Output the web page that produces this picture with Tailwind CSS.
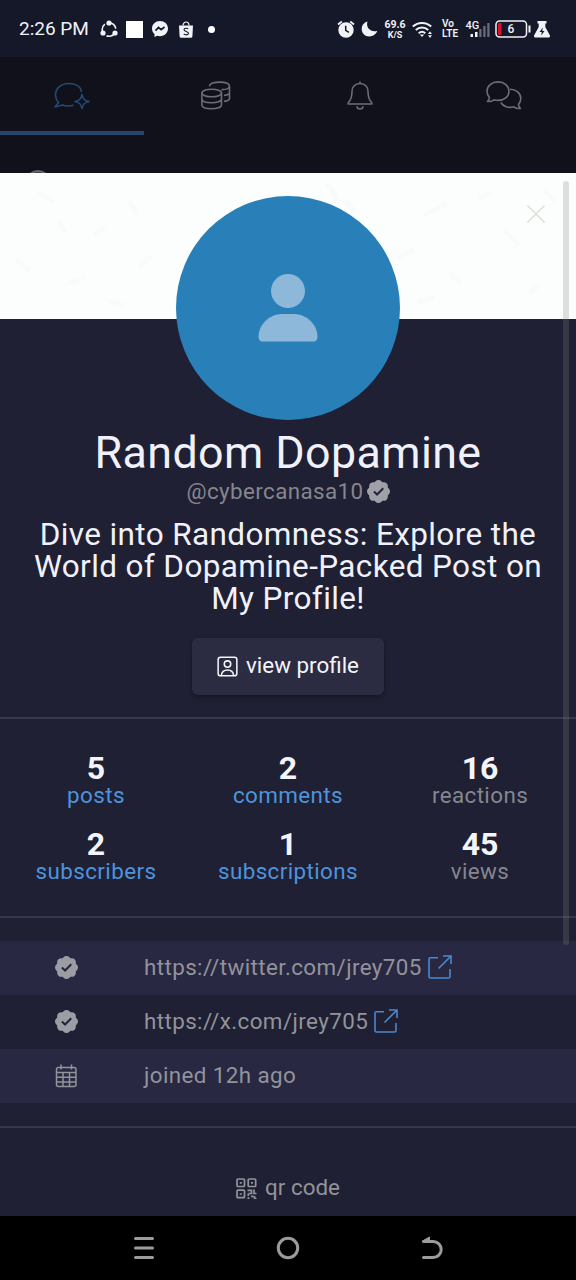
<!DOCTYPE html>
<html lang="en">
<head>
<meta charset="utf-8">
<title>Random Dopamine</title>
<script src="https://cdn.jsdelivr.net/npm/@tailwindcss/browser@4"></script>
</head>
<body class="bg-black">
<svg class="hidden">
  <symbol id="seal" viewBox="0 0 16 16"><path d="M10.067.87a2.89 2.89 0 0 0-4.134 0l-.622.638-.89-.011a2.89 2.89 0 0 0-2.924 2.924l.01.89-.636.622a2.89 2.89 0 0 0 0 4.134l.637.622-.011.89a2.89 2.89 0 0 0 2.924 2.924l.89-.01.622.636a2.89 2.89 0 0 0 4.134 0l.622-.637.89.011a2.89 2.89 0 0 0 2.924-2.924l-.01-.89.636-.622a2.89 2.89 0 0 0 0-4.134l-.637-.622.011-.89a2.89 2.89 0 0 0-2.924-2.924l-.89.01z"/><path d="M4.800 8 7 10.100l4.300-4.400" fill="none" stroke="#24253a" stroke-width="1.400"/></symbol>
  <symbol id="ext" viewBox="0 0 24 24"><path d="M10 2.800H2.500a1.500 1.500 0 0 0-1.500 1.500v17.200A1.500 1.500 0 0 0 2.500 23h18a1.500 1.500 0 0 0 1.500-1.500V14M15 1h8v8M23 1 10.500 13.500" fill="none" stroke="currentColor" stroke-width="1.600"/></symbol>
</svg>
<div class="w-[576px] h-[1280px] overflow-hidden flex flex-col font-['Roboto',sans-serif] bg-[#1f2033] relative">
  <!-- status bar -->
  <div class="h-[57px] shrink-0 bg-[#151828] text-[#f1f2f8] flex items-center justify-between pl-[19px] pr-[25px] pt-px">
    <div class="flex items-center">
      <span class="text-[19px] w-[81px] whitespace-nowrap">2:26 PM</span>
      <svg class="w-[18px] h-[18px]" viewBox="0 0 18 18" fill="none" stroke="currentColor" stroke-width="1.600"><circle cx="9" cy="9.500" r="6.800" stroke-dasharray="10.200 4" stroke-dashoffset="-3"/><g fill="currentColor" stroke="none"><circle cx="9" cy="3" r="2.600"/><circle cx="3" cy="13" r="2.600"/><circle cx="15" cy="13" r="2.600"/></g></svg>
      <div class="w-[17px] h-[17px] bg-white ml-2"></div>
      <svg class="w-4 h-4 ml-[9px]" viewBox="0 0 16 16"><path fill="currentColor" d="M8 0C3.500 0 0 3.200 0 7.500c0 2.300 1 4.300 2.500 5.600V16l2.600-1.200c.9.200 1.900.4 2.900.4 4.500 0 8-3.300 8-7.700S12.500 0 8 0"/><path d="m3.500 9.600 3-3.200 2.600 2.200 3.400-2.600" fill="none" stroke="#151828" stroke-width="1.700"/></svg>
      <svg class="w-4 h-[17px] ml-[10px]" viewBox="0 0 16 17"><path fill="currentColor" d="M1 4.500h14l-.6 11.100a1.200 1.200 0 0 1-1.200 1.100H2.800a1.200 1.200 0 0 1-1.200-1.100z"/><path d="M5 4.500a3 3.500 0 0 1 6 0" fill="none" stroke="currentColor" stroke-width="1.200"/><path d="M10.200 8C9.500 7 6 6.700 6 8.700c0 2 4.500 1.400 4.500 3.600 0 2-3.500 2-4.800.6" fill="none" stroke="#151828" stroke-width="1.100"/></svg>
      <div class="w-[7px] h-[7px] rounded-full bg-white ml-[14px]"></div>
    </div>
    <div class="flex items-center">
      <svg class="w-[18px] h-[18px]" viewBox="0 0 18 18"><circle cx="9" cy="10" r="7.700" fill="currentColor"/><path d="M1 4.500 4.800 1.500M17 4.500 13.200 1.500" stroke="currentColor" stroke-width="1.800"/><path d="M8.700 5.800v4.600l3.200 1.900" fill="none" stroke="#151828" stroke-width="1.500"/></svg>
      <svg class="w-[17px] h-[16px] ml-[6px]" viewBox="0 0 17 16"><path fill="currentColor" d="M6.500.5C2.800 1.500.7 4.500.7 8c0 4.300 3.300 7.500 7.500 7.500 4 0 7-2.500 8.100-5.700-5.800 2.200-12-3-9.800-9.300"/></svg>
      <div class="w-[22px] ml-[6px] text-center font-bold leading-[11px] whitespace-nowrap flex flex-col items-center"><span class="text-[10.500px]">69.6</span><span class="text-[9px] leading-[10px]">K/S</span></div>
      <svg class="w-[21px] h-[17px] ml-[6px]" viewBox="0 0 21 17" fill="none" stroke="currentColor" stroke-width="2"><path d="M.8 5.500a13.500 13.500 0 0 1 18.400 0M3.800 9a9 9 0 0 1 12.400 0M6.700 12.200a5 5 0 0 1 6.600 0"/><path d="m7.800 13.500 2.200 2.400 2.200-2.400z" fill="currentColor" stroke="none"/><path d="m16 13 2-2.800L20 13zm0 1.300 2 2.700 2-2.700z" fill="currentColor" stroke="none"/></svg>
      <div class="w-[18px] ml-[9px] font-semibold text-[10px] leading-[10px]">Vo<br>LTE</div>
      <svg class="w-[26px] h-[20px] ml-[5px]" viewBox="0 0 26 20"><path fill="#6b6d7a" d="M14.300 10h2.200v8h-2.200zM18.300 7h2.200v11h-2.200zM22.300 4h2.200v14h-2.200z"/><path fill="currentColor" d="M5.500 15h2.500v3H5.500zM10 13h2.500v5H10z"/><text x="0.500" y="9.500" font-size="11" font-weight="500" fill="currentColor">4G</text></svg>
      <svg class="w-[36px] h-[18px] ml-[4px]" viewBox="0 0 36 18"><rect x="1" y="1" width="30.500" height="16" rx="3.500" fill="none" stroke="currentColor" stroke-width="1.500"/><rect x="3" y="3" width="3.500" height="12" rx="1" fill="#d8142c"/><path d="M34.500 5.500v7" stroke="currentColor" stroke-width="2"/><text x="16" y="13.300" text-anchor="middle" font-size="12" font-weight="500" fill="currentColor">6</text></svg>
      <svg class="w-[16px] h-[18px] ml-[3px] mr-px" viewBox="0 0 16 18"><path fill="currentColor" d="M3.500 1h9v2.500h-1.200V7l4.500 8.200c.6 1.100-.1 2.300-1.300 2.300H1.500C.3 17.500-.4 16.300.2 15.200L4.700 7V3.500H3.500z"/><path d="M8.800 7.500 5.500 12h2.300l-.6 3.500L10.500 11H8.200z" fill="#151828"/></svg>
    </div>
  </div>
  <!-- dimmed tab bar -->
  <div class="h-[116px] shrink-0 bg-[#10111b] flex flex-col overflow-hidden">
    <div class="grid grid-cols-4 h-[78px] shrink-0 text-[#6c6d78]">
      <div class="flex justify-center pt-[22px] text-[#264a75] border-b-[4px] border-[#28456b]">
        <svg class="w-[36px] h-[30px]" viewBox="0 0 36 30" fill="none" stroke="currentColor" stroke-width="1.600" stroke-linejoin="round"><path d="M27.500 13.200C27 7.500 21.500 4.500 14.500 4.500 7 4.500 1.500 9.500 1.500 16c0 2.800 1.200 5.500 3 7.500L1 28l7.500-2c3 1.200 7.500 1.200 11 .3"/><path d="M28 15.500c.8 4.500 2.500 6.200 7 7-4.500.8-6.200 2.500-7 7-.8-4.500-2.500-6.200-7-7 4.500-.8 6.200-2.500 7-7z"/></svg>
      </div>
      <div class="flex justify-center pt-6">
        <svg class="w-[30px] h-[29px]" viewBox="0 0 30 29" fill="none" stroke="currentColor" stroke-width="1.600"><ellipse cx="10.700" cy="12" rx="9.800" ry="3.800"/><path d="M.9 12v12c0 5 19.600 5 19.600 0V12M.9 18c0 5 19.600 5 19.600 0M8.500 5.200c0-5.500 20-5.500 20 0v12c0 1.700-2.300 2.900-5.500 3.200M28.500 5.200c0 2.400-3.500 3.600-8 3.400M28.500 11.200c0 1.700-2.300 2.900-5.500 3.200"/></svg>
      </div>
      <div class="flex justify-center pt-6">
        <svg class="w-[26px] h-[29px]" viewBox="0 0 26 29" fill="none" stroke="currentColor" stroke-width="1.600" stroke-linejoin="round"><path d="M13 .5v2M13 2.500c-5 0-8 3.500-8 8 0 6.500-1.500 9-3.800 11.300v1.200h23.600v-1.200C22.500 19.500 21 17 21 10.500c0-4.500-3-8-8-8zM10 25.200c0 3.700 6 3.700 6 0"/></svg>
      </div>
      <div class="flex justify-center pt-6">
        <svg class="w-[36px] h-[29px]" viewBox="0 0 36 29" fill="none" stroke="currentColor" stroke-width="1.600" stroke-linejoin="round"><path d="M12 .9c6.200 0 11 4 11 9.300s-4.800 9.200-11 9.200c-1.400 0-2.700-.2-3.900-.6C6.500 20 4 20.700 1.500 20.500c1-1.200 1.800-2.500 1.900-4C2 14.800 1 12.600 1 10.200 1 4.900 5.800.9 12 .9z"/><path d="M24 8.200c6 0 10.800 4 10.800 9.200 0 2.400-.9 4.500-2.300 6.100.1 1.500.9 2.800 1.900 4-2.500.2-5-.5-6.600-1.700-5 1.500-10.800-.3-13-4.300"/></svg>
      </div>
    </div>
    <div class="mt-[35px] ml-[25px] w-[26px] h-[26px] rounded-full border-2 border-[#65656b] bg-[#45464c] shrink-0"></div>
  </div>
  <!-- profile card -->
  <div class="flex-1 flex flex-col items-center min-h-0">
    <div class="w-full h-[146px] shrink-0 bg-[#fcfefe] relative flex justify-end pt-[32px] pr-[31px]">
      <svg class="absolute inset-0 w-full h-full" viewBox="0 0 576 146" fill="none" stroke="#f8fbfb" stroke-width="5" stroke-linecap="round"><path d="m40 20 12 8M95 62l8-6M18 88l10 9M70 110l14-5M130 30l6 9M150 84l-9 8M110 128l12 4M60 50l5 8M328 12l10 14M345 28l8 8M425 42l8-4 12-6M400 85l12-8M450 100l9 9M505 58l12 12M480 24l10-3M530 120l8-7M545 18l9 9M420 128l12-3"/></svg>
      <svg class="w-[18px] h-[18px]" viewBox="0 0 18 18" stroke="#e2e1dd" stroke-width="1.600"><path d="m.5.500 17 17M17.500.500l-17 17"/></svg>
    </div>
    <div class="-mt-[123px] w-[224px] h-[224px] shrink-0 rounded-full bg-[#2980b9] flex justify-center pt-[78px] relative">
      <svg class="w-[60px] h-[68px]" viewBox="0 0 60 68" fill="#8db8da"><circle cx="30" cy="17" r="17"/><path d="M24 40h12c13 0 23.500 11 23.500 23 0 2.500-1.500 4.500-4 4.500h-51c-2.500 0-4-2-4-4.500 0-12 10.500-23 23.500-23z"/></svg>
    </div>
    <div class="mt-[11px] h-[44px] leading-[44px] text-[44.800px] tracking-[0.4px] text-[#f0f1fb] whitespace-nowrap">Random Dopamine</div>
    <div class="mt-[4px] h-[26px] flex items-center gap-[3px] text-[22.400px] tracking-[0.4px] text-[#85868f]">@cybercanasa10<svg class="w-[23px] h-[23px] -mt-[2px]" fill="#a0a1a8"><use href="#seal"/></svg></div>
    <div class="mt-[14px] text-center leading-8 text-[31.500px] tracking-[0.37px] text-[#f0f1fb] whitespace-nowrap">Dive into Randomness: Explore the<br>World of Dopamine-Packed Post on<br>My Profile!</div>
    <div class="mt-[23px] w-[192px] h-[57px] shrink-0 rounded-[6px] bg-[#2b2c41] shadow-[0_2px_5px_rgba(0,0,0,0.35)] flex items-center justify-center gap-2 pb-px text-[22.400px] text-[#f4f4fb] whitespace-nowrap">
      <svg class="w-[21px] h-[21px] shrink-0" viewBox="0 0 22 22" fill="none" stroke="currentColor" stroke-width="1.600"><rect x="1.200" y="1.200" width="19.600" height="19.600" rx="2.500"/><circle cx="11" cy="8.500" r="3.400"/><path d="M4.500 20.500c.5-4 3-5.800 6.500-5.800s6 1.800 6.500 5.800"/></svg>view profile</div>
    <div class="mt-[22px] w-full h-[2px] shrink-0 bg-[#37384a]"></div>
    <div class="mt-[33px] grid grid-cols-3 w-full text-center text-[22.400px] tracking-[0.4px] leading-[22px] text-[#4e93dc] gap-y-[22px]">
      <div><div class="text-[32px] leading-8 font-bold tracking-normal text-[#f4f4fb]">5</div>posts</div>
      <div><div class="text-[32px] leading-8 font-bold tracking-normal text-[#f4f4fb]">2</div>comments</div>
      <div class="text-[#85868f]"><div class="text-[32px] leading-8 font-bold tracking-normal text-[#f4f4fb]">16</div>reactions</div>
      <div><div class="text-[32px] leading-8 font-bold tracking-normal text-[#f4f4fb]">2</div>subscribers</div>
      <div><div class="text-[32px] leading-8 font-bold tracking-normal text-[#f4f4fb]">1</div>subscriptions</div>
      <div class="text-[#85868f]"><div class="text-[32px] leading-8 font-bold tracking-normal text-[#f4f4fb]">45</div>views</div>
    </div>
    <div class="mt-[34px] w-full h-[2px] shrink-0 bg-[#37384a]"></div>
    <div class="mt-[23px] w-full text-[22.400px] tracking-[0.4px] text-[#92939b]">
      <div class="h-[54px] bg-[#282842] flex items-center"><svg class="w-[23px] h-[23px] ml-[55px] mr-[66px] -mt-px" fill="#9c9da4"><use href="#seal"/></svg>https://twitter.com/jrey705<svg class="w-6 h-6 ml-[6px] -mt-[3px] text-[#4a88d0]"><use href="#ext"/></svg></div>
      <div class="h-[54px] flex items-center"><svg class="w-[23px] h-[23px] ml-[55px] mr-[66px] -mt-px" fill="#9c9da4"><use href="#seal"/></svg>https://x.com/jrey705<svg class="w-6 h-6 ml-[6px] -mt-[3px] text-[#4a88d0]"><use href="#ext"/></svg></div>
      <div class="h-[54px] bg-[#282842] flex items-center"><svg class="w-[22px] h-[24px] ml-[55px] mr-[67px]" viewBox="0 0 22 24" fill="none" stroke="currentColor" stroke-width="1.500"><rect x="1.500" y="3.500" width="19.500" height="19" rx="2"/><path d="M1.500 8.500h19.500M1.500 13.300h19.500M1.500 18h19.500M8 8.500V23M14.500 8.500V23M6 .5v5M16.500 .5v5"/></svg>joined 12h ago</div>
    </div>
    <div class="mt-[23px] w-full h-[2px] shrink-0 bg-[#37384a]"></div>
    <div class="mt-[47px] h-[26px] flex items-center gap-2 text-[22.400px] text-[#92939b]">
      <svg class="w-[21px] h-[21px]" viewBox="0 0 21 21" fill="none" stroke="currentColor" stroke-width="1.700"><rect x="1" y="1" width="7.500" height="7.500" rx="1"/><rect x="12.200" y="1" width="7.500" height="7.500" rx="1"/><rect x="1" y="12.200" width="7.500" height="7.500" rx="1"/><path d="M3.800 4.800h2M15 4.800h2M3.800 16h2M11.500 12.300h4v3.200h-3M18 11.500v4h2.500M12.300 15.500V18M15 18.300h2.500M11.500 20.200h2M18.500 18v2.500h2"/></svg>qr code</div>
  </div>
  <!-- navigation bar -->
  <div class="h-16 shrink-0 bg-black grid grid-cols-3 px-[72px] text-[#9b9b9b]">
    <div class="flex items-center justify-center"><svg class="w-6 h-6" viewBox="0 0 24 24" stroke="currentColor" stroke-width="3" stroke-linecap="round"><path d="M3.500 2.500h17M3.500 12h17M3.500 21.500h17"/></svg></div>
    <div class="flex items-center justify-center"><svg class="w-6 h-6" viewBox="0 0 24 24" fill="none" stroke="currentColor" stroke-width="3"><circle cx="12" cy="12" r="9.700"/></svg></div>
    <div class="flex items-center justify-center"><svg class="w-6 h-6" viewBox="0 0 24 24" fill="none" stroke="currentColor" stroke-width="3" stroke-linecap="round"><path d="M3.500 5.500h9.700a8 8 0 0 1 0 16H3.500"/><path d="M2.500 5 9.500 1v5" fill="currentColor" stroke-width="1"/></svg></div>
  </div>
  <!-- overlay scrollbar -->
  <div class="absolute left-[563px] top-[181px] w-[6px] h-[764px] rounded-full bg-[#808080]/25"></div>
</div>
</body>
</html>
